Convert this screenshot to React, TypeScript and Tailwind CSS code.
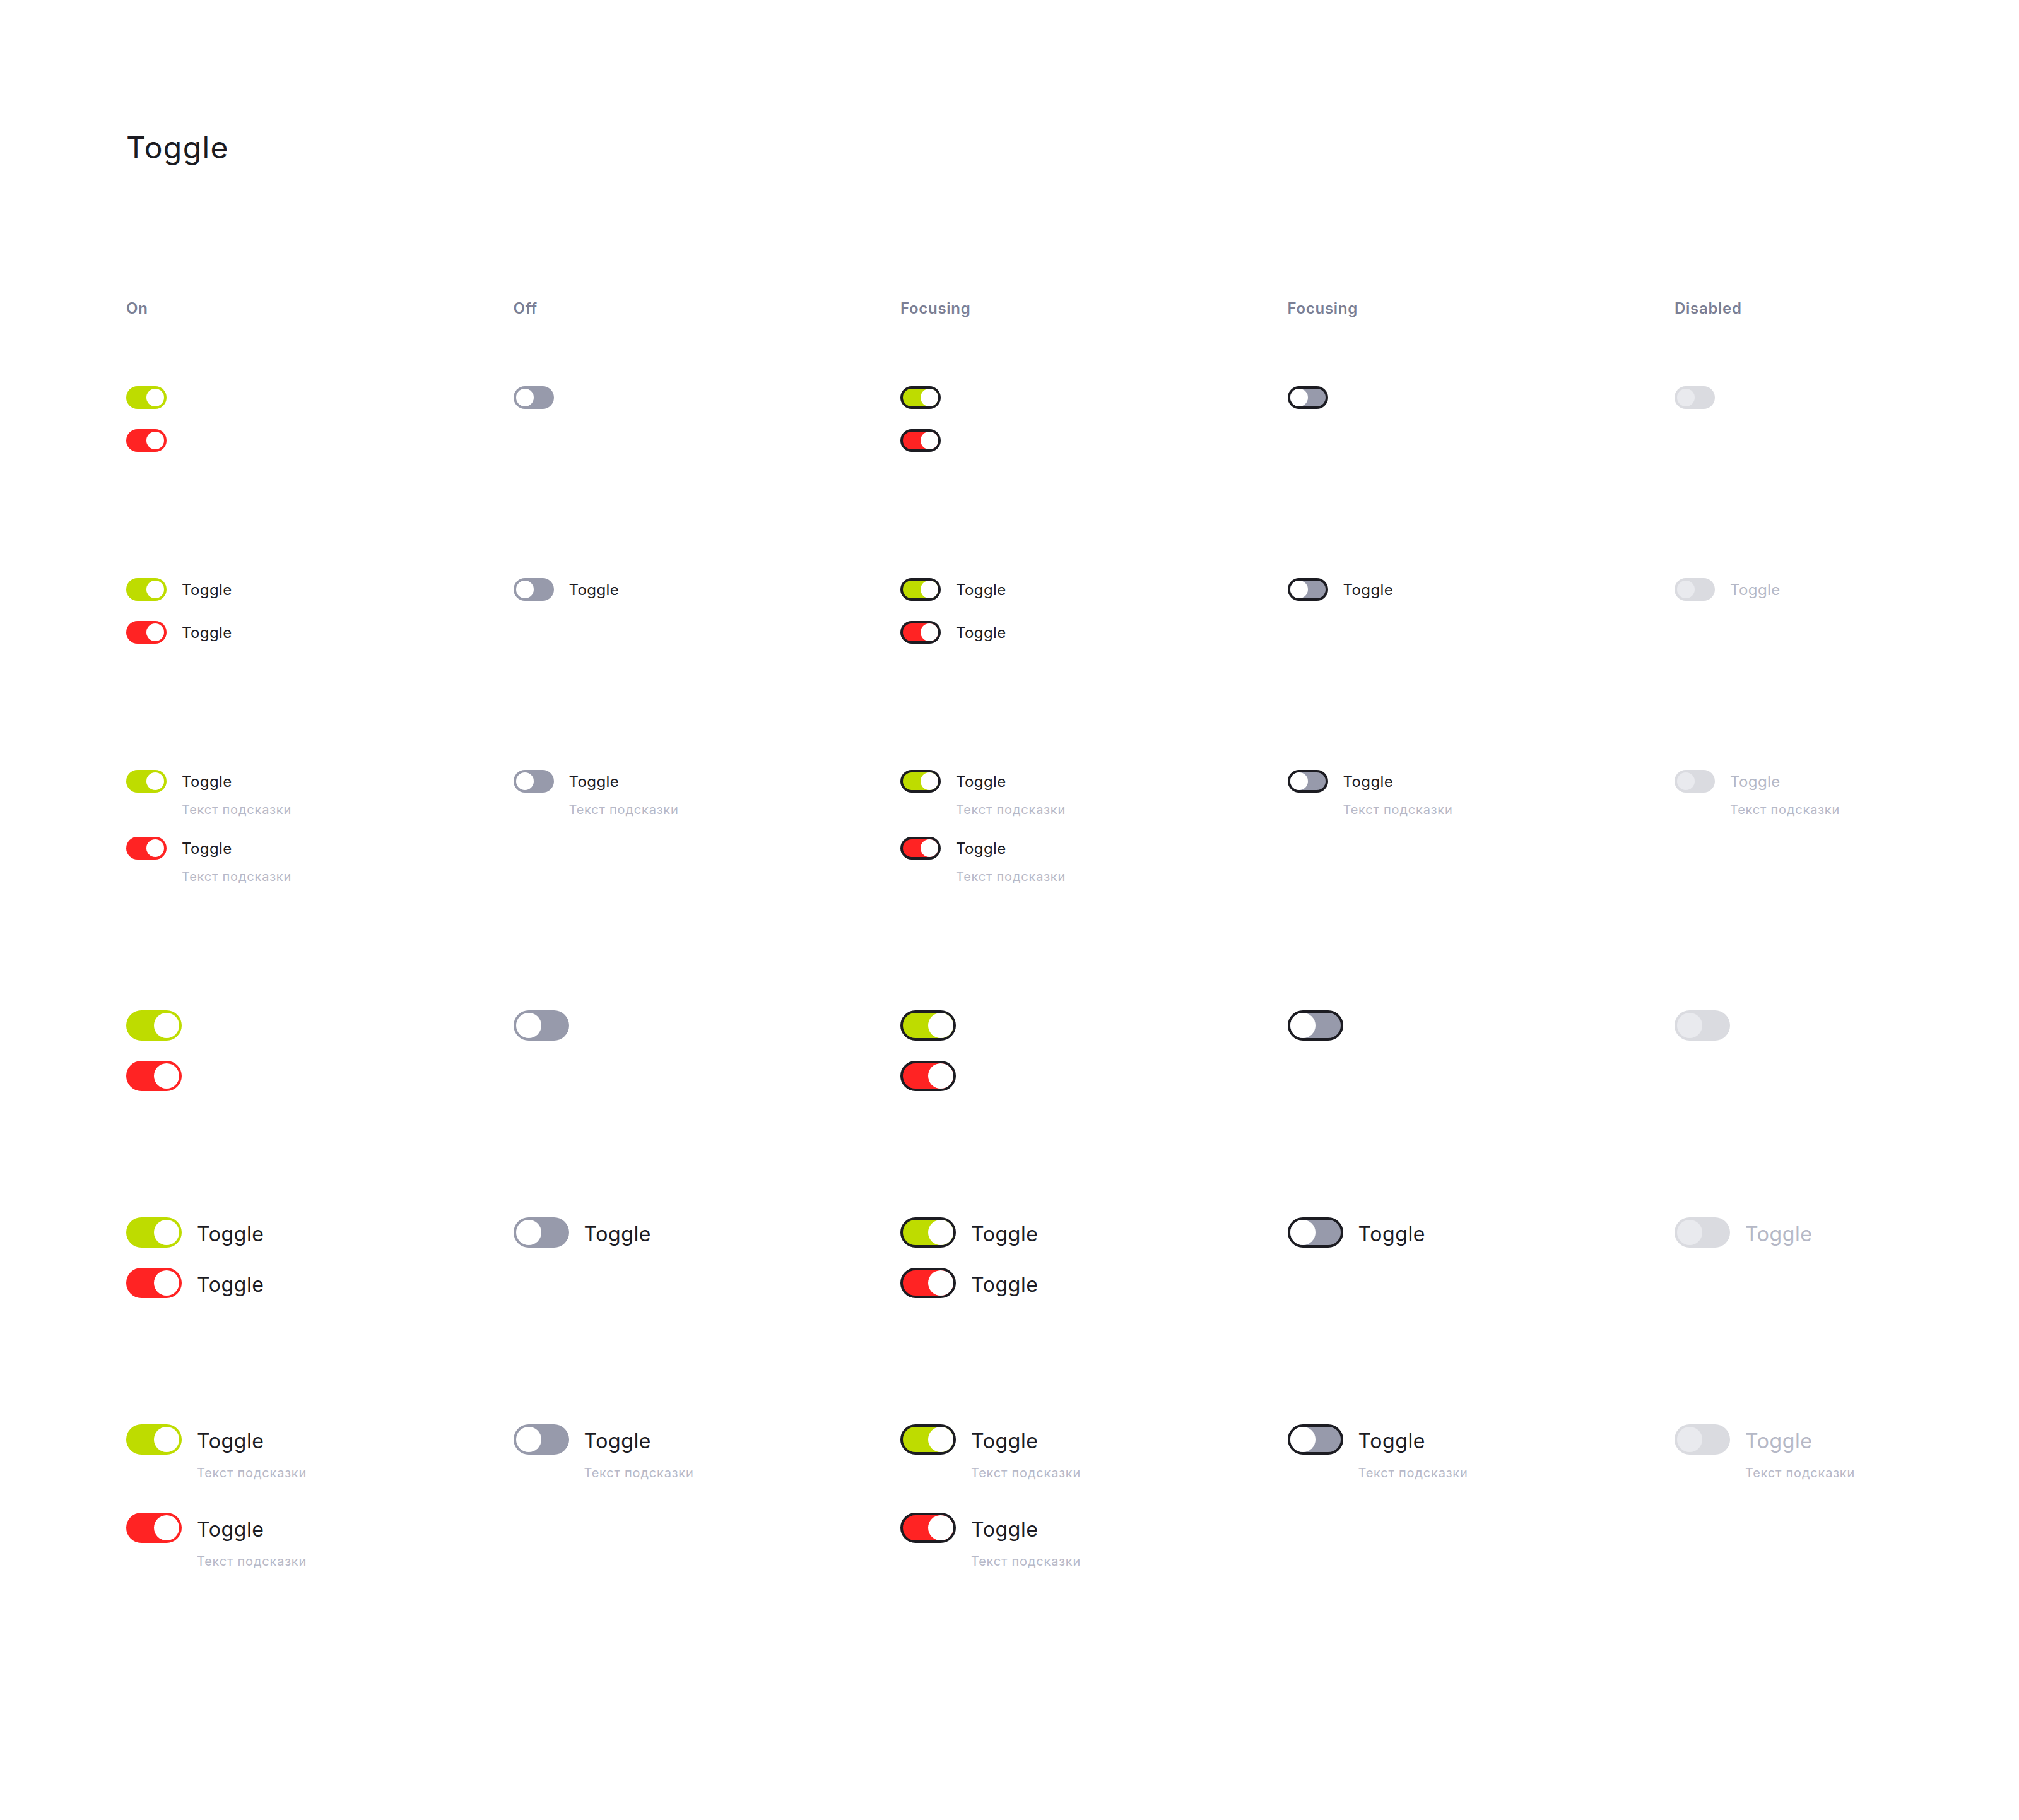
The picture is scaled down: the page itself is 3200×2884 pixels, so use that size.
import React from "react";

type Tone = "lime" | "red" | "off" | "disabled";
type Size = "s" | "l";

type Cell = { tone: Tone; focus?: boolean };

const columns: { title: string; items: Cell[] }[] = [
  { title: "On", items: [{ tone: "lime" }, { tone: "red" }] },
  { title: "Off", items: [{ tone: "off" }] },
  { title: "Focusing", items: [{ tone: "lime", focus: true }, { tone: "red", focus: true }] },
  { title: "Focusing", items: [{ tone: "off", focus: true }] },
  { title: "Disabled", items: [{ tone: "disabled" }] },
];

const trackTone: Record<Tone, string> = {
  lime: "bg-[#bedc00] justify-end",
  red: "bg-[#ff2323] justify-end",
  off: "bg-[#979aab] justify-start",
  disabled: "bg-[#dadbe0] justify-start",
};

function Toggle({ size, tone, focus }: { size: Size; tone: Tone; focus?: boolean }) {
  const track = size === "s" ? "w-[64px] h-[36px]" : "w-[88px] h-[48px]";
  const knob = size === "s" ? "w-[28px] h-[28px]" : "w-[40px] h-[40px]";
  return (
    <div
      className={`${track} ${trackTone[tone]} shrink-0 rounded-full flex items-center ${
        focus ? "border-4 border-[#1c1c22]" : "p-[4px]"
      }`}
    >
      <div className={`${knob} rounded-full ${tone === "disabled" ? "bg-[#e9eaee]" : "bg-white"}`} />
    </div>
  );
}

function Item({ size, cell, label, hint }: { size: Size; cell: Cell; label: boolean; hint: boolean }) {
  const disabled = cell.tone === "disabled";
  const labelCls =
    size === "s"
      ? "h-[36px] text-[24px] leading-[38px] tracking-[0.4px]"
      : "h-[48px] text-[32px] leading-[54px] tracking-[0.6px]";
  return (
    <div className="flex items-start gap-[24px]">
      <Toggle size={size} tone={cell.tone} focus={cell.focus} />
      {label && (
        <div className="flex flex-col">
          <span className={`${labelCls} ${disabled ? "text-[#b5b8c6]" : "text-[#1c1c24]"}`}>Toggle</span>
          {hint && (
            <span
              className={`${size === "s" ? "mt-[15px]" : "mt-[17px]"} text-[20px] leading-[24px] text-[#b7b9c8] tracking-[0.8px]`}
            >
              Текст подсказки
            </span>
          )}
        </div>
      )}
    </div>
  );
}

const groups: { size: Size; label: boolean; hint: boolean; gap: string }[] = [
  { size: "s", label: false, hint: false, gap: "gap-[32px]" },
  { size: "s", label: true, hint: false, gap: "gap-[32px]" },
  { size: "s", label: true, hint: true, gap: "gap-[31px]" },
  { size: "l", label: false, hint: false, gap: "gap-[32px]" },
  { size: "l", label: true, hint: false, gap: "gap-[32px]" },
  { size: "l", label: true, hint: true, gap: "gap-[51px]" },
];

export default function App() {
  return (
    <div className="min-h-screen bg-white font-[Inter,'Noto_Sans',sans-serif] px-[200px] pt-[210px] pb-[300px]">
      <h1 className="text-[48px] leading-[48px] font-normal tracking-[1.4px] text-[#1b1b22]">Toggle</h1>

      <div className="mt-[219px] grid grid-cols-[repeat(5,613.5px)]">
        {columns.map((c, i) => (
          <div key={i} className="text-[24px] leading-[24px] font-semibold tracking-[0.7px] text-[#7b7f95]">
            {c.title}
          </div>
        ))}
      </div>

      <div className="mt-[111px] flex flex-col gap-[200px]">
        {groups.map((g, gi) => (
          <div key={gi} className="grid grid-cols-[repeat(5,613.5px)] items-start">
            {columns.map((c, ci) => (
              <div key={ci} className={`flex flex-col ${g.gap}`}>
                {c.items.map((cell, ii) => (
                  <Item key={ii} size={g.size} cell={cell} label={g.label} hint={g.hint} />
                ))}
              </div>
            ))}
          </div>
        ))}
      </div>
    </div>
  );
}
